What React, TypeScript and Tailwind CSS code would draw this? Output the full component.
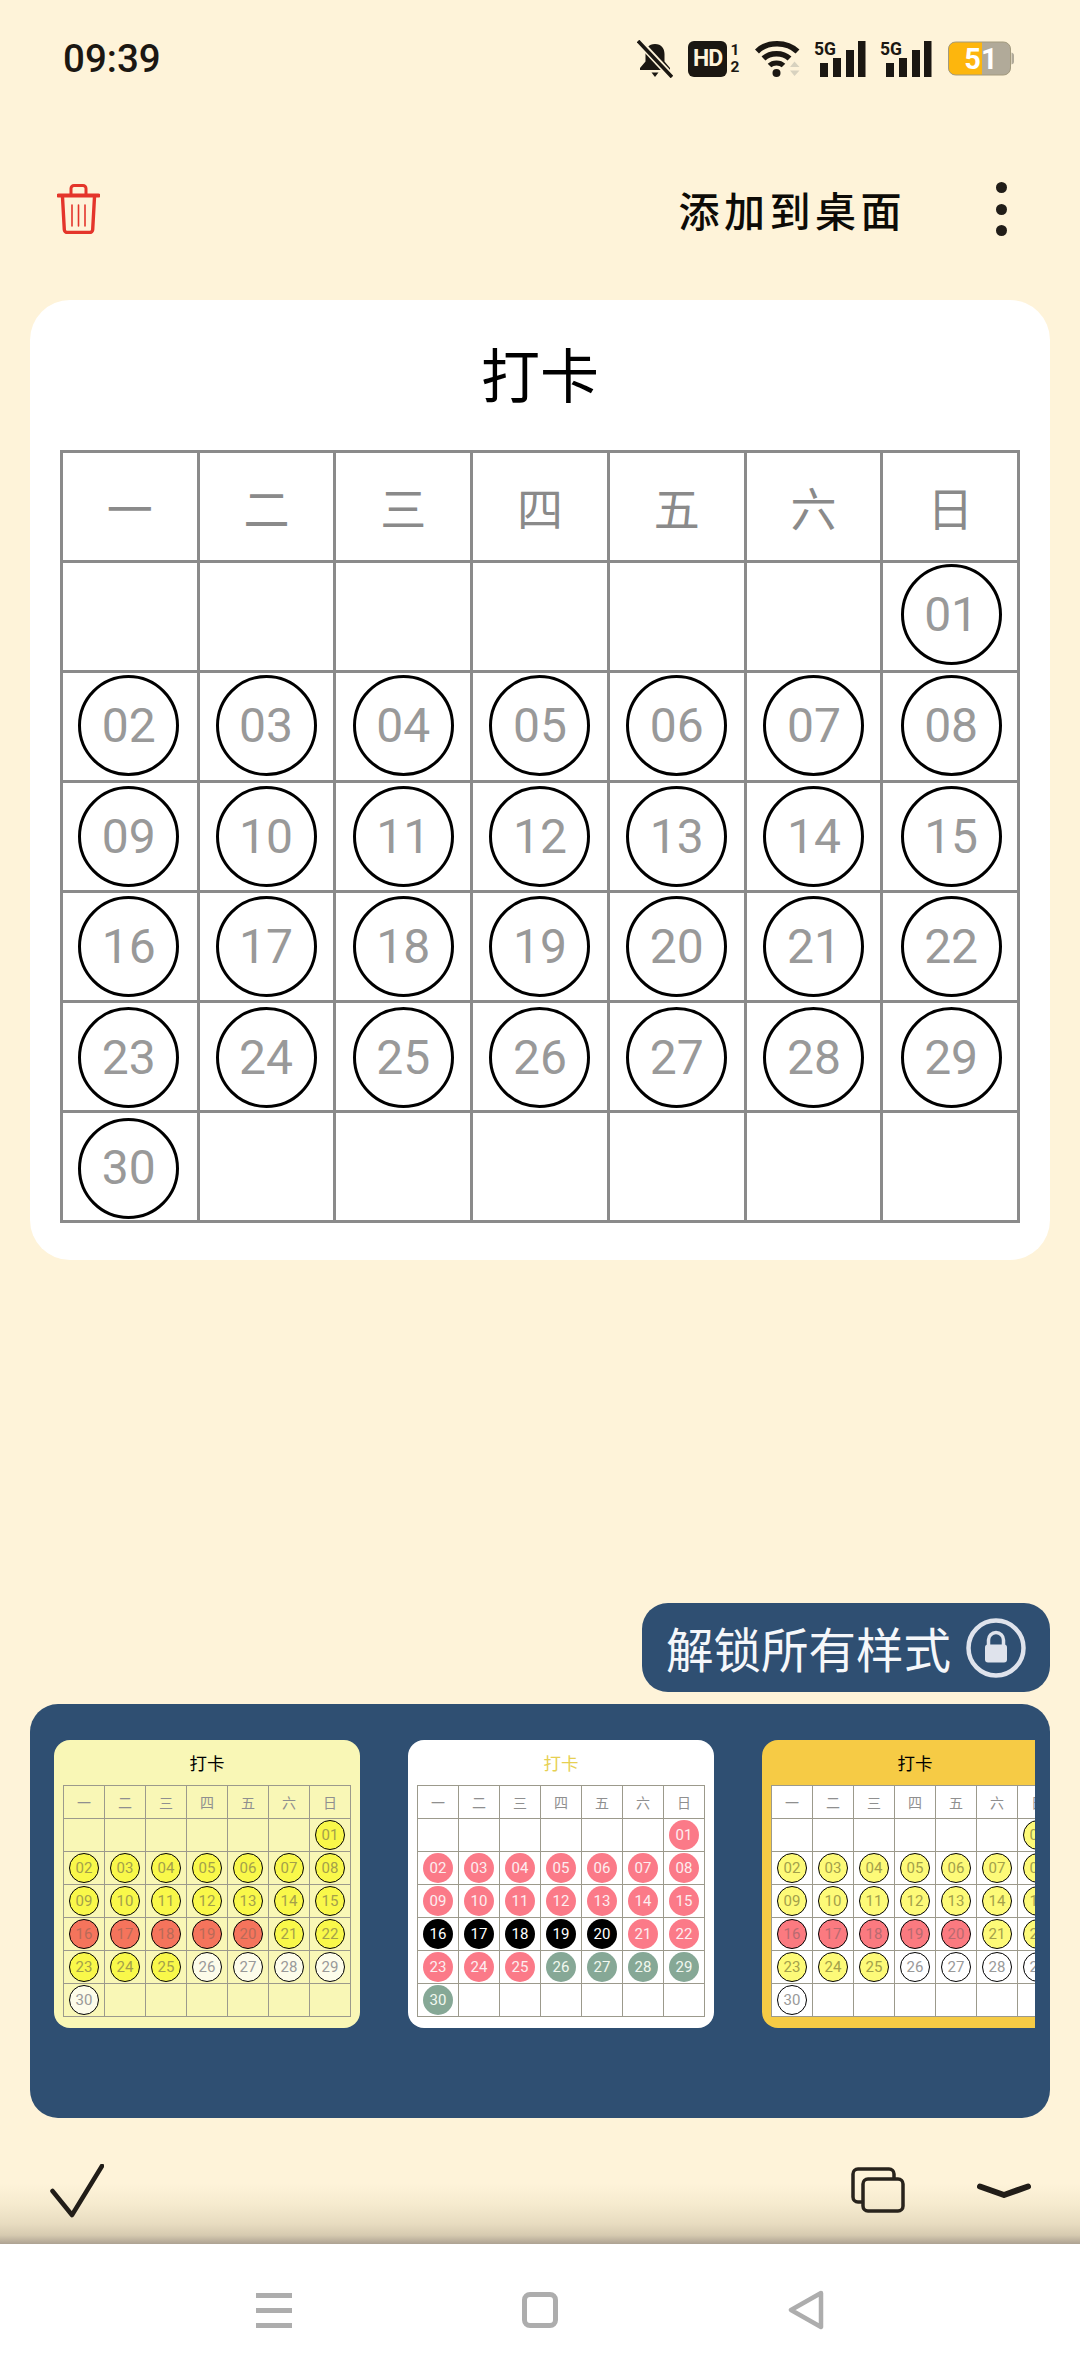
import React from "react";

const CJK = "font-['Noto_Sans_CJK_SC','Noto_Sans',sans-serif]";
const NUM = "font-['Roboto','Noto_Sans_CJK_SC',sans-serif]";
const WEEK = ["一", "二", "三", "四", "五", "六", "日"];
const DAYS: (number | null)[] = [
  null, null, null, null, null, null, 1,
  ...Array.from({ length: 29 }, (_, i) => i + 2),
  null, null, null, null, null, null,
];
const ROW_NUDGE = ["mb-[4px]", "mb-[2px]", "", "", "mt-[2px]", "mt-[3px]"];
const COL_NUDGE = ["mr-[2px]", "mr-[1px]", "", "", "", "ml-[1px]", "ml-[2px]"];

type Palette = { a: string; b: string; c: string };

function ThumbCalendar({ bg, title, grid, palette }: { bg: string; title: string; grid: string; palette: Palette }) {
  return (
    <div className={`w-[306px] h-[288px] shrink-0 rounded-[16px] px-[9px] flex flex-col ${bg}`}>
      <div className={`h-[45px] flex items-center justify-center text-[17.5px] leading-none ${CJK} ${title}`}>打卡</div>
      <div className={`grid grid-cols-7 border-l border-t border-[#9c9a8c] w-[288px] ${grid}`}>
        {WEEK.map((w) => (
          <div key={w} className={`h-[33px] border-r border-b border-[#9c9a8c] flex items-center justify-center text-[14px] text-[#8f8f8f] ${CJK}`}>{w}</div>
        ))}
        {DAYS.map((d, i) => {
          const tone = d === null ? "" : d >= 16 && d <= 20 ? palette.b : d >= 26 ? palette.c : palette.a;
          return (
            <div key={i} className="h-[33px] border-r border-b border-[#9c9a8c] flex items-center justify-center">
              {d !== null && (
                <div className={`w-[30px] h-[30px] shrink-0 rounded-full flex items-center justify-center text-[15px] ${NUM} ${tone}`}>
                  {String(d).padStart(2, "0")}
                </div>
              )}
            </div>
          );
        })}
      </div>
    </div>
  );
}

function Signal() {
  return (
    <svg width="52" height="38" viewBox="0 0 52 38" className="shrink-0 overflow-visible">
      <text x="0" y="15" fontFamily="Roboto" fontWeight="700" fontSize="19" textLength="22" lengthAdjust="spacingAndGlyphs" fill="#1b1712">5G</text>
      <rect x="6" y="23" width="8" height="14" fill="#1b1712" />
      <rect x="19" y="18" width="8" height="19" fill="#1b1712" />
      <rect x="32" y="10" width="8" height="27" fill="#1b1712" />
      <rect x="44" y="1" width="7.5" height="36" fill="#1b1712" />
    </svg>
  );
}

function StatusBar() {
  return (
    <div className="h-[118px] pl-[63px] pr-[66px] flex items-center justify-between text-[#1b1712]">
      <span className={`text-[38.5px] leading-none font-medium ${NUM}`}>09:39</span>
      <div className="flex items-center">
        <svg width="36" height="38" viewBox="0 0 36 38" className="shrink-0">
          <path d="M18 4c-6.5 0-9.5 4.5-9.5 10v7.5L3 28v2h30v-2l-5.5-6.5V14C27.500 8.500 24.500 4 18 4z" fill="#1b1712" />
          <path d="M14.500 32.500h7L18 37z" fill="#1b1712" />
          <path d="M2 1.500 34 36" stroke="#fef3d9" strokeWidth="7" />
          <path d="M1 1 35 37" stroke="#1b1712" strokeWidth="3.600" />
        </svg>
        <div className="ml-[15px] flex items-center shrink-0">
          <div className={`w-[39px] h-[36px] rounded-[6px] bg-[#1b1712] text-[#fef3d9] flex items-center justify-center text-[23px] font-bold tracking-[-1px] ${NUM}`}>HD</div>
          <div className={`ml-[3px] w-[10px] flex flex-col items-center text-[15.5px] font-bold leading-[17px] ${NUM}`}>
            <span>1</span>
            <span>2</span>
          </div>
        </div>
        <svg width="45" height="38" viewBox="0 0 45 38" className="ml-[15px] shrink-0">
          <path d="M2 11.500C12 1 32 1 42.500 11.500" fill="none" stroke="#1b1712" strokeWidth="5.500" />
          <path d="M8.500 18.500C15 12 28 12 34.500 18.500" fill="none" stroke="#1b1712" strokeWidth="5.500" />
          <path d="M14.500 25.500C18 22 25 22 28.500 25.500" fill="none" stroke="#1b1712" strokeWidth="5" />
          <circle cx="21.500" cy="33" r="4" fill="#1b1712" />
          <path d="M35 27l4.500-5.500 5 5.500zM35 30.500h9.500L39.500 36z" fill="#d8d2bf" />
        </svg>
        <div className="ml-[14px] shrink-0"><Signal /></div>
        <div className="ml-[14px] shrink-0"><Signal /></div>
        <svg width="66" height="36" viewBox="0 0 66 36" className="ml-[16px] shrink-0">
          <rect x="0.500" y="1" width="62" height="33" rx="7" fill="#b1aa99" />
          <path d="M7 1h27v33H7a6.500 6.500 0 0 1-6.500-6.500v-20A6.500 6.500 0 0 1 7 1z" fill="#fdb60d" />
          <rect x="0.500" y="1" width="62" height="33" rx="7" fill="none" stroke="#a39a7e" strokeWidth="1" />
          <path d="M63.500 11.500c1.800.5 2.500 1.500 2.500 3v6c0 1.500-.7 2.500-2.500 3z" fill="#b1aa99" />
          <text x="33" y="28" textAnchor="middle" fontFamily="Roboto" fontWeight="700" fontSize="29" fill="#fff">51</text>
        </svg>
      </div>
    </div>
  );
}

function Header() {
  return (
    <div className="h-[182px] pl-[57px] pr-[73px] flex items-center justify-between">
      <svg width="43" height="50" viewBox="0 0 43 50" className="shrink-0" fill="none" stroke="#e4352b" strokeLinecap="round" strokeLinejoin="round">
        <path d="M14 10V4.500A3 3 0 0 1 17 1.500h9a3 3 0 0 1 3 3V10" strokeWidth="3" />
        <path d="M1.500 11.500h40" strokeWidth="4" />
        <path d="M5.500 13l1.800 32.500a3 3 0 0 0 3 3h22.400a3 3 0 0 0 3-3L37.500 13" strokeWidth="3.400" />
        <path d="M15 21v21M21.500 21v21M28 21v21" strokeWidth="1.600" />
      </svg>
      <div className="flex items-center">
        <span className={`text-[41px] leading-none tracking-[4.500px] font-medium text-[#0d0b07] ${CJK}`}>添加到桌面</span>
        <div className="ml-[90px] flex flex-col gap-[10.500px] shrink-0">
          <div className="w-[11px] h-[11px] rounded-full bg-[#211d18]" />
          <div className="w-[11px] h-[11px] rounded-full bg-[#211d18]" />
          <div className="w-[11px] h-[11px] rounded-full bg-[#211d18]" />
        </div>
      </div>
    </div>
  );
}

function MainCalendar() {
  return (
    <div className="mx-[30px] h-[960px] rounded-[40px] bg-white px-[30px] flex flex-col">
      <div className={`h-[150px] flex items-center justify-center text-[59px] leading-none text-black pb-[5px] ${CJK}`}>打卡</div>
      <div className="grid grid-cols-7 border-l-[3px] border-t-[3px] border-[#8a8a8a] w-[960px]">
        {WEEK.map((w) => (
          <div key={w} className={`h-[110px] border-r-[3px] border-b-[3px] border-[#8a8a8a] flex items-center justify-center text-[46px] text-[#8a8a8a] ${CJK}`}>{w}</div>
        ))}
        {DAYS.map((d, i) => (
          <div key={i} className="h-[110px] border-r-[3px] border-b-[3px] border-[#8a8a8a] flex items-center justify-center">
            {d !== null && (
              <div className={`w-[101px] h-[101px] shrink-0 rounded-full border-[3px] border-black flex items-center justify-center text-[48px] text-[#999999] ${NUM} ${ROW_NUDGE[Math.floor(i / 7)]} ${COL_NUDGE[i % 7]}`}>
                {String(d).padStart(2, "0")}
              </div>
            )}
          </div>
        ))}
      </div>
    </div>
  );
}

function Unlock() {
  return (
    <div className="self-end mr-[30px] mt-[343px] w-[408px] h-[89px] rounded-[26px] bg-[#2f4f72] pl-[24px] pr-[24px] flex items-center justify-between">
      <span className={`text-[47.500px] leading-none text-[#f5f7fa] ${CJK}`}>解锁所有样式</span>
      <svg width="60" height="60" viewBox="0 0 60 60" className="shrink-0">
        <circle cx="30" cy="30" r="27.500" fill="none" stroke="#dfe3ec" strokeWidth="4.500" />
        <path d="M22.500 27v-5a7.500 7.500 0 0 1 15 0v5" fill="none" stroke="#dfe3ec" strokeWidth="3.500" />
        <rect x="19" y="26.500" width="22" height="18" rx="3" fill="#dfe3ec" />
      </svg>
    </div>
  );
}

function StylePanel() {
  return (
    <div className="mx-[30px] mt-[12px] h-[414px] rounded-[28px] bg-[#2f4f72] pl-[24px] pr-[15px] pt-[36px]">
      <div className="flex gap-[48px] overflow-hidden">
        <ThumbCalendar
          bg="bg-[#f9f7b6]"
          title="text-black"
          grid=""
          palette={{
            a: "bg-[#f9f84a] border border-black text-[#a3a04a]",
            b: "bg-[#f5745c] border border-black text-[#b86a58]",
            c: "bg-[#fdfcea] border border-black text-[#999999]",
          }}
        />
        <ThumbCalendar
          bg="bg-white"
          title="text-[#e6d052]"
          grid=""
          palette={{
            a: "bg-[#fb7a88] text-[#fdeef0]",
            b: "bg-black text-white",
            c: "bg-[#86a896] text-[#f2f8f0]",
          }}
        />
        <ThumbCalendar
          bg="bg-[#f6cb45]"
          title="text-black"
          grid="bg-white"
          palette={{
            a: "bg-[#fdfa78] border border-black text-[#a3a04a]",
            b: "bg-[#fb7a80] border border-black text-[#b86a70]",
            c: "bg-white border border-black text-[#999999]",
          }}
        />
      </div>
    </div>
  );
}

function Toolbar() {
  return (
    <div className="h-[126px] bg-[linear-gradient(to_bottom,#fef3d9_52%,#f6ebcf_68%,#e8dcc0_84%,#d6cab0_93%,#ada292_100%)] pl-[50px] pr-[49px] pt-[46px] flex items-start justify-between">
      <svg width="54" height="54" viewBox="0 0 54 54" className="shrink-0" fill="none" stroke="#211d18" strokeWidth="4.500" strokeLinecap="round" strokeLinejoin="round">
        <path d="M2.500 27 22 51 52 2" />
      </svg>
      <div className="flex items-start">
        <svg width="54" height="46" viewBox="0 0 54 46" className="mt-[3px] shrink-0" fill="none" stroke="#28231c" strokeWidth="3.500">
          <path d="M11 35H7a5 5 0 0 1-5-5V7a5 5 0 0 1 5-5h31a5 5 0 0 1 5 5v5" />
          <rect x="12" y="12" width="40" height="32" rx="5" />
        </svg>
        <svg width="54" height="16" viewBox="0 0 54 16" className="ml-[72px] mt-[19px] shrink-0" fill="none" stroke="#211d18" strokeWidth="6" strokeLinecap="round" strokeLinejoin="round">
          <path d="M3 3.500 27 12 51 3.500" />
        </svg>
      </div>
    </div>
  );
}

function NavBar() {
  return (
    <div className="h-[132px] bg-white flex items-center justify-center gap-[230px]">
      <div className="w-[36px] flex flex-col gap-[10px]">
        <div className="h-[5px] bg-[#adadad]" />
        <div className="h-[5px] bg-[#adadad]" />
        <div className="h-[5px] bg-[#adadad]" />
      </div>
      <div className="w-[36px] h-[36px] rounded-[8px] border-[5px] border-[#adadad]" />
      <svg width="36" height="40" viewBox="0 0 36 40" className="shrink-0" fill="none" stroke="#adadad" strokeWidth="4.500" strokeLinejoin="round">
        <path d="M33 3 3 20l30 17z" />
      </svg>
    </div>
  );
}

export default function App() {
  return (
    <div className="w-[1080px] h-[2376px] bg-[#fef3d9] flex flex-col overflow-hidden">
      <StatusBar />
      <Header />
      <MainCalendar />
      <Unlock />
      <StylePanel />
      <Toolbar />
      <NavBar />
    </div>
  );
}
